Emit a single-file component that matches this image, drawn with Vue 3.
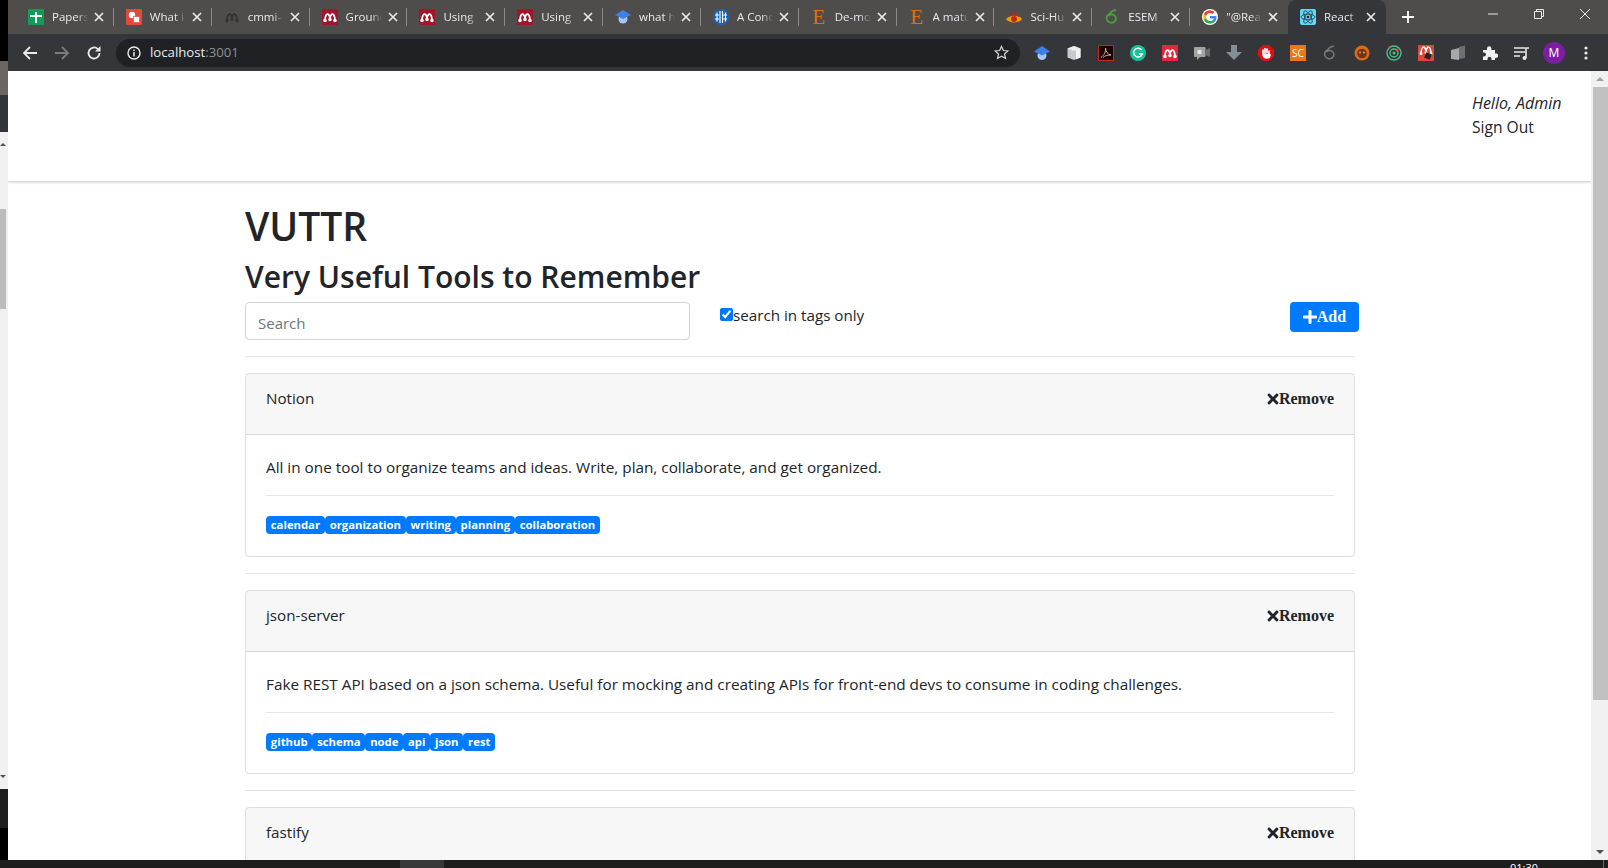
<template>
  <div class="screen">
    <div class="desktop-row">
      <div class="left-strip">
        <div class="ls-black"></div>
        <div class="ls-brown"></div>
        <div class="ls-dark"></div>
        <div class="ls-scroll">
          <span class="ls-up"></span>
          <div class="ls-thumb"></div>
          <span class="ls-down"></span>
        </div>
        <div class="ls-grey"></div>
        <div class="ls-black ls-end"></div>
      </div>

      <div class="window">
        <div class="tabstrip">
          <div
            v-for="(tab, i) in tabs"
            :key="i"
            class="tab"
            :class="{ active: tab.active, 'no-sep': tab.active || tabs[i + 1]?.active }"
          >
            <span class="favicon">
              <svg v-if="tab.icon === 'sheet'" viewBox="0 0 16 16" width="16" height="16">
                <rect width="16" height="16" rx="1" fill="#0f9d58" />
                <path d="M7 3h2v3h5v2H9v6H7V8H2V6h5z" fill="#fff" />
              </svg>
              <svg v-else-if="tab.icon === 'what'" viewBox="0 0 16 16" width="16" height="16">
                <rect width="16" height="16" rx="1" fill="#e2483c" />
                <circle cx="6" cy="6" r="3.200" fill="#fff" />
                <rect x="7.500" y="7.500" width="6" height="6" fill="#fff" stroke="#e2483c" stroke-width=".6" />
              </svg>
              <svg v-else-if="tab.icon === 'github'" viewBox="0 0 16 16" width="16" height="16">
                <path :d="mendeleyArcs" fill="none" stroke="#333" stroke-width="1.800" />
                <path :d="mendeleyFeet" fill="none" stroke="#333" stroke-width="3.600" stroke-linecap="round" />
              </svg>
              <svg v-else-if="tab.icon === 'mendeley'" viewBox="0 0 16 16" width="16" height="16">
                <rect width="16" height="16" fill="#a0162b" />
                <path :d="mendeleyArcs" fill="none" stroke="#fff" stroke-width="1.800" />
                <path :d="mendeleyFeet" fill="none" stroke="#fff" stroke-width="3.600" stroke-linecap="round" />
              </svg>
              <svg v-else-if="tab.icon === 'cap'" viewBox="0 0 16 16" width="16" height="16">
                <circle cx="8" cy="10" r="4.500" fill="#a5c7fa" />
                <path d="M8 1l8 5-8 4-8-4z" fill="#3f7fe8" />
              </svg>
              <svg v-else-if="tab.icon === 'ais'" viewBox="0 0 16 16" width="16" height="16">
                <circle cx="8" cy="8" r="8" fill="#1c62b5" />
                <path d="M4 3.500v9M7 2v12M9.500 2v12M12.500 3.500v9M2 6h4M10 6h4M2 10h4M10 10h4" stroke="#fff" stroke-width="1.100" fill="none" />
              </svg>
              <span v-else-if="tab.icon === 'elsevier'" class="fav-e">E</span>
              <svg v-else-if="tab.icon === 'scihub'" viewBox="0 0 16 16" width="16" height="16">
                <path d="M0 10c3-4.500 13-4.500 16 0-3 4.500-13 4.500-16 0z" fill="#e5a000" />
                <circle cx="8" cy="10" r="3" fill="#c6251d" />
                <path d="M2 6l2 1.500M5 3.500l1 2.500M8 2.500v3M11 3.500l-1 2.500M14 6l-2 1.500" stroke="#c6251d" stroke-width="1.300" />
              </svg>
              <svg v-else-if="tab.icon === 'overleaf'" viewBox="0 0 16 16" width="16" height="16">
                <path :d="leaf" fill="none" stroke="#47a141" stroke-width="1.800" />
              </svg>
              <svg v-else-if="tab.icon === 'google'" viewBox="0 0 16 16" width="16" height="16">
                <circle cx="8" cy="8" r="8" fill="#fff" />
                <path d="M14.500 8.200c0-.5 0-.9-.1-1.300H8v2.500h3.700c-.2.900-.7 1.600-1.400 2.100v1.700h2.200c1.300-1.200 2-3 2-5z" fill="#4285f4" />
                <path d="M8 14.700c1.900 0 3.400-.6 4.500-1.600l-2.200-1.700c-.6.400-1.400.7-2.300.7-1.800 0-3.300-1.200-3.800-2.800H1.900v1.800c1.100 2.200 3.400 3.600 6.100 3.600z" fill="#34a853" />
                <path d="M4.200 9.300C4 8.900 4 8.400 4 8s0-.9.200-1.300V4.900H1.900C1.500 5.800 1.300 6.900 1.300 8s.2 2.200.6 3.100z" fill="#fbbc05" />
                <path d="M8 4c1 0 1.900.3 2.600 1l1.900-1.900C11.400 2 9.900 1.300 8 1.300c-2.700 0-5 1.400-6.100 3.600l2.300 1.800C4.700 5.200 6.200 4 8 4z" fill="#ea4335" />
              </svg>
              <svg v-else-if="tab.icon === 'react'" viewBox="0 0 16 16" width="16" height="16">
                <rect width="16" height="16" rx="2" fill="#61dafb" />
                <g fill="none" stroke="#20232a" stroke-width=".7">
                  <ellipse cx="8" cy="8" rx="7" ry="2.800" />
                  <ellipse cx="8" cy="8" rx="7" ry="2.800" transform="rotate(60 8 8)" />
                  <ellipse cx="8" cy="8" rx="7" ry="2.800" transform="rotate(120 8 8)" />
                </g>
                <circle cx="8" cy="8" r="1.300" fill="#20232a" />
              </svg>
            </span>
            <span class="tab-title">{{ tab.title }}</span>
            <svg class="tab-close" viewBox="0 0 10 10" width="10" height="10">
              <path d="M1 1l8 8M9 1l-8 8" stroke="#e8eaed" stroke-width="1.700" />
            </svg>
          </div>
          <svg class="new-tab" viewBox="0 0 12 12" width="12" height="12">
            <path d="M6 0v12M0 6h12" stroke="#fff" stroke-width="1.800" />
          </svg>
          <div class="win-controls">
            <svg viewBox="0 0 12 12" width="12" height="12"><path d="M1 6h10" stroke="#e8e8e8" /></svg>
            <svg viewBox="0 0 12 12" width="12" height="12"><path d="M1.500 3.500h7v7h-7zM3.500 3.500v-2h7v7h-2" fill="none" stroke="#e8e8e8" /></svg>
            <svg viewBox="0 0 12 12" width="12" height="12"><path d="M1 1l10 10M11 1L1 11" stroke="#e8e8e8" /></svg>
          </div>
        </div>

        <div class="toolbar">
          <div class="nav-buttons">
            <svg viewBox="0 0 16 16" width="16" height="16"><path d="M15 8H2M8 2L2 8l6 6" fill="none" stroke="#e8eaed" stroke-width="1.800" /></svg>
            <svg viewBox="0 0 16 16" width="16" height="16"><path d="M1 8h13M8 2l6 6-6 6" fill="none" stroke="#7b7c7f" stroke-width="1.800" /></svg>
            <svg viewBox="0 0 16 16" width="16" height="16">
              <path d="M13.500 8a5.500 5.500 0 1 1-1.600-3.900" fill="none" stroke="#e8eaed" stroke-width="1.800" />
              <path d="M14.500 1v5.500H9z" fill="#e8eaed" />
            </svg>
          </div>
          <div class="omnibox">
            <svg class="info" viewBox="0 0 14 14" width="14" height="14">
              <circle cx="7" cy="7" r="6" fill="none" stroke="#e8eaed" stroke-width="1.400" />
              <path d="M7 6v4.500M7 3.500v1.400" stroke="#e8eaed" stroke-width="1.500" />
            </svg>
            <span class="url">localhost<span class="port">:3001</span></span>
            <svg class="star" viewBox="0 0 16 16" width="15" height="15">
              <path d="M8 1.500l2 4.400 4.800.5-3.600 3.200 1 4.700L8 11.900l-4.200 2.400 1-4.700L1.200 6.400 6 5.900z" fill="none" stroke="#d5d6d8" stroke-width="1.300" />
            </svg>
          </div>
          <div class="extensions">
            <span class="ext"><svg viewBox="0 0 16 16" width="16" height="16"><circle cx="8" cy="10.500" r="4.500" fill="#a5c7fa" /><path d="M8 1l8 5.500-8 4-8-4z" fill="#3f7fe8" /></svg></span>
            <span class="ext"><svg viewBox="0 0 16 16" width="16" height="16"><path d="M8 1l6.500 2.500v9L8 15l-6.500-2.500v-9z" fill="#c9c9c9" /><path d="M1.500 3.500L8 6l6.500-2.500L8 1z" fill="#ececec" /><path d="M10 5.200l4.500-1.700v9L10 14.200z" fill="#f2f2f2" /></svg></span>
            <span class="ext"><svg viewBox="0 0 16 16" width="16" height="16"><rect x=".5" y=".5" width="15" height="15" fill="#1a0505" stroke="#c0291c" /><path d="M3 12.500c3-2 5-6 4.500-9.500 0 3 2 6.500 5.500 7-3 0-6 .5-8 2.500" fill="none" stroke="#e8b4ae" stroke-width=".9" /></svg></span>
            <span class="ext"><svg viewBox="0 0 16 16" width="16" height="16"><circle cx="8" cy="8" r="8" fill="#15c39a" /><path d="M11.800 5.200A4.400 4.400 0 1 0 12.300 9H8.800" fill="none" stroke="#fff" stroke-width="1.500" /></svg></span>
            <span class="ext"><svg viewBox="0 0 16 16" width="16" height="16"><rect width="16" height="16" fill="#e7253c" /><path :d="mendeleyArcs" fill="none" stroke="#fff" stroke-width="1.800" /><path :d="mendeleyFeet" fill="none" stroke="#fff" stroke-width="3.600" stroke-linecap="round" /></svg></span>
            <span class="ext"><svg viewBox="0 0 16 16" width="16" height="16"><rect y="2" width="11.500" height="10" rx="1" fill="#a3a3a3" /><path d="M3 12v3l3-3z" fill="#a3a3a3" /><path d="M11.500 5l4.500-2v9l-4.500-2z" fill="#6c6c6c" /><rect x="3.500" y="5" width="4" height="4" rx="1" fill="#e6e6e6" /></svg></span>
            <span class="ext"><svg viewBox="0 0 16 16" width="16" height="16"><path d="M5 0h6v7h5l-8 8-8-8h5z" fill="#7f9097" /></svg></span>
            <span class="ext"><svg viewBox="0 0 16 16" width="16" height="16"><path d="M5 0h6l5 5v6l-5 5H5l-5-5V5z" fill="#e01010" /><path d="M5 8V4.500M7 8V3M9 8V3.500M11 9V5.500M5 8c0 3 1 5 4 5s3-2 3-4" stroke="#fff" stroke-width="1.700" fill="#fff" /></svg></span>
            <span class="ext"><span class="sc-badge">SC</span></span>
            <span class="ext"><svg viewBox="0 0 16 16" width="16" height="16"><path :d="leaf" fill="none" stroke="#77787b" stroke-width="1.500" /></svg></span>
            <span class="ext"><svg viewBox="0 0 16 16" width="16" height="16"><circle cx="8" cy="8" r="7.500" fill="#e06a13" /><circle cx="8" cy="8.500" r="4.800" fill="#6e3413" /><circle cx="6" cy="7.500" r=".9" fill="#e9b07a" /><circle cx="10" cy="7.500" r=".9" fill="#e9b07a" /></svg></span>
            <span class="ext"><svg viewBox="0 0 16 16" width="16" height="16"><circle cx="8" cy="8" r="7" fill="none" stroke="#4dbd8c" stroke-width="1.400" /><circle cx="8" cy="8" r="4" fill="none" stroke="#4dbd8c" stroke-width="1.400" /><circle cx="8" cy="8" r="1.500" fill="#4dbd8c" /><circle cx="11" cy="5" r="1.500" fill="#e44d3c" /><circle cx="3.500" cy="2.500" r="1.200" fill="#e44d3c" /></svg></span>
            <span class="ext"><svg viewBox="0 0 16 16" width="16" height="16"><rect width="16" height="16" fill="#d9483b" /><g transform="translate(0 -3)"><path :d="mendeleyArcs" fill="none" stroke="#fff" stroke-width="1.500" /><path :d="mendeleyFeet" fill="none" stroke="#fff" stroke-width="3" stroke-linecap="round" /></g><rect x="7" y="8" width="6" height="6" transform="rotate(20 10 11)" fill="#2c2220" /></svg></span>
            <span class="ext"><svg viewBox="0 0 16 16" width="16" height="16"><path d="M1 5l8-2v12l-8-1z" fill="#a8a8a8" /><path d="M9 2l6-1.500V13l-6 1z" fill="#6f6f6f" /></svg></span>
            <span class="ext"><svg viewBox="0 0 16 16" width="16" height="16"><path d="M1 5h4V3.500a2.200 2.200 0 0 1 4.400 0V5H13v3.500h1a2.200 2.200 0 0 1 0 4.400h-1V15H9.500v-1.200a2 2 0 0 0-4 0V15H1v-3.500h1a2 2 0 0 0 0-4H1z" fill="#f0f1f2" /></svg></span>
            <span class="ext"><svg viewBox="0 0 16 16" width="16" height="16"><path d="M0 3h11M0 7h11M0 11h6" stroke="#e8eaed" stroke-width="1.600" /><path d="M12 13V3h3" fill="none" stroke="#e8eaed" stroke-width="1.600" /><circle cx="10.500" cy="13" r="2" fill="#e8eaed" /></svg></span>
            <span class="ext"><span class="avatar">M</span></span>
            <span class="ext"><svg viewBox="0 0 4 16" width="4" height="16"><circle cx="2" cy="3" r="1.600" fill="#e8eaed" /><circle cx="2" cy="8" r="1.600" fill="#e8eaed" /><circle cx="2" cy="13" r="1.600" fill="#e8eaed" /></svg></span>
          </div>
        </div>

        <div class="viewport">
          <div class="page">
            <header class="page-header">
              <div class="user">
                <em>Hello, Admin</em>
                <span class="sign-out">Sign Out</span>
              </div>
            </header>
            <main class="container">
              <h1>VUTTR</h1>
              <h2>Very Useful Tools to Remember</h2>
              <div class="controls">
                <input class="search" type="text" placeholder="Search" />
                <label class="tags-only"><input type="checkbox" checked />search in tags only</label>
                <button type="button" class="btn-add">
                  <svg viewBox="0 0 448 512" width="14" height="16"><path d="M416 208H272V64c0-17.670-14.330-32-32-32h-32c-17.670 0-32 14.330-32 32v144H32c-17.670 0-32 14.330-32 32v32c0 17.670 14.330 32 32 32h144v144c0 17.670 14.330 32 32 32h32c17.670 0 32-14.330 32-32V304h144c17.670 0 32-14.330 32-32v-32c0-17.670-14.330-32-32-32z" fill="currentColor" /></svg>Add
                </button>
              </div>
              <hr />
              <template v-for="tool in tools" :key="tool.name">
                <section class="card">
                  <div class="card-header">
                    <span class="tool-name">{{ tool.name }}</span>
                    <button type="button" class="btn-remove">
                      <svg viewBox="0 0 352 512" width="12" height="16"><path d="M242.720 256l100.070-100.070c12.280-12.280 12.280-32.190 0-44.480l-22.240-22.240c-12.280-12.280-32.190-12.280-44.480 0L176 189.280 75.930 89.210c-12.280-12.280-32.190-12.280-44.480 0L9.210 111.450c-12.280 12.280-12.280 32.190 0 44.480L109.280 256 9.210 356.070c-12.280 12.280-12.280 32.190 0 44.480l22.240 22.240c12.280 12.280 32.200 12.280 44.480 0L176 322.720l100.070 100.070c12.280 12.280 32.200 12.280 44.480 0l22.240-22.240c12.280-12.280 12.280-32.190 0-44.480L242.720 256z" fill="currentColor" /></svg>Remove
                    </button>
                  </div>
                  <div v-if="tool.description" class="card-body">
                    <p>{{ tool.description }}</p>
                    <div class="card-rule"></div>
                    <div class="badges">
                      <span v-for="tag in tool.tags" :key="tag" class="badge">{{ tag }}</span>
                    </div>
                  </div>
                </section>
                <hr />
              </template>
            </main>
          </div>
          <div class="scrollbar">
            <span class="sb-up"></span>
            <div class="sb-thumb"></div>
            <span class="sb-down"></span>
          </div>
        </div>
      </div>
    </div>
    <footer class="taskbar">
      <span class="task-active"></span>
      <span class="clock">01:30</span>
      <span class="task-edge"></span>
    </footer>
  </div>
</template>

<script setup>
// shared favicon strokes
const mendeleyArcs = 'M3 11C3.500 3.500 7 3.500 8 9C9 3.500 12.500 3.500 13 11'
const mendeleyFeet = 'M3 11.500h0M8 10.500h0M13 11.500h0'
const leaf = 'M12 1c-3 .5-5 1.500-6 3.500C3 6 2 8.500 3 11c1 2.500 4.500 3.500 7 2 2.500-1.500 2.500-5 .5-6.500-2-1.500-4.500-1-6 .5'

const tabs = [
  { title: 'Papers', icon: 'sheet' },
  { title: 'What i', icon: 'what' },
  { title: 'cmmi-', icon: 'github' },
  { title: 'Ground', icon: 'mendeley' },
  { title: 'Using', icon: 'mendeley' },
  { title: 'Using', icon: 'mendeley' },
  { title: 'what h', icon: 'cap' },
  { title: 'A Conc', icon: 'ais' },
  { title: 'De-mo', icon: 'elsevier' },
  { title: 'A matu', icon: 'elsevier' },
  { title: 'Sci-Hu', icon: 'scihub' },
  { title: 'ESEM', icon: 'overleaf' },
  { title: '"@Rea', icon: 'google' },
  { title: 'React', icon: 'react', active: true }
]

const tools = [
  {
    name: 'Notion',
    description: 'All in one tool to organize teams and ideas. Write, plan, collaborate, and get organized.',
    tags: ['calendar', 'organization', 'writing', 'planning', 'collaboration']
  },
  {
    name: 'json-server',
    description: 'Fake REST API based on a json schema. Useful for mocking and creating APIs for front-end devs to consume in coding challenges.',
    tags: ['github', 'schema', 'node', 'api', 'json', 'rest']
  },
  { name: 'fastify' }
]
</script>

<style>
html,
body {
  margin: 0;
  overflow: hidden;
}
</style>

<style scoped>
.screen {
  width: 1608px;
  height: 868px;
  display: flex;
  flex-direction: column;
  overflow: hidden;
  background: #000;
  font-family: "Open Sans", "Noto Sans", sans-serif;
  color: #212529;
}
.desktop-row {
  flex: 1;
  min-height: 0;
  display: flex;
}

.left-strip {
  width: 8px;
  display: flex;
  flex-direction: column;
}
.ls-black {
  height: 61px;
  background: #000;
}
.ls-brown {
  height: 34px;
  background: #6c6661;
}
.ls-dark {
  height: 37px;
  background: #33343a;
}
.ls-scroll {
  height: 657px;
  background: #f0f0f0;
  position: relative;
}
.ls-up,
.ls-down {
  position: absolute;
  left: 0;
  border: 3px solid transparent;
}
.ls-up {
  top: 8px;
  border-bottom-color: #505050;
}
.ls-down {
  bottom: 8px;
  border-top-color: #505050;
}
.ls-thumb {
  margin-top: 77px;
  width: 6px;
  height: 100px;
  background: #bcbcbc;
}
.ls-grey {
  height: 39px;
  background: #1e1e1e;
}
.ls-end {
  flex: 1;
}

.window {
  flex: 1;
  min-width: 0;
  display: flex;
  flex-direction: column;
}

.tabstrip {
  height: 34px;
  flex: none;
  padding-left: 8px;
  background: #4f4d4b;
  display: flex;
  align-items: stretch;
  font-size: 11.500px;
}
.tab {
  width: 97.850px;
  flex: none;
  box-sizing: border-box;
  padding: 0 0 0 12px;
  display: flex;
  align-items: center;
  color: #e8eaed;
  position: relative;
}
.tab::after {
  content: "";
  position: absolute;
  right: 0;
  top: 8px;
  height: 18px;
  width: 1px;
  background: #8b8a88;
}
.tab.no-sep::after {
  display: none;
}
.tab.active {
  background: #35363a;
  border-radius: 8px 8px 0 0;
}
.favicon {
  width: 16px;
  height: 16px;
  flex: none;
  display: block;
}
.favicon svg {
  display: block;
}
.fav-e {
  display: block;
  font: 21px/16px "Liberation Serif", serif;
  color: #e06d12;
  text-align: center;
}
.tab-title {
  width: 38px;
  margin: -2px 0 0 8px;
  flex: none;
  overflow: hidden;
  white-space: nowrap;
  -webkit-mask-image: linear-gradient(90deg, #000 65%, transparent 95%);
  mask-image: linear-gradient(90deg, #000 65%, transparent 95%);
}
.tab-close {
  margin-left: 4px;
  flex: none;
}
.new-tab {
  margin: 11px 0 0 16px;
  flex: none;
}
.win-controls {
  margin-left: auto;
  padding: 8px 17px 0 0;
  display: flex;
  gap: 34px;
  align-items: flex-start;
}

.toolbar {
  height: 37px;
  flex: none;
  background: #35363a;
  display: flex;
  align-items: center;
}
.nav-buttons {
  width: 108px;
  flex: none;
  padding-left: 14px;
  box-sizing: border-box;
  display: flex;
  gap: 16px;
}
.omnibox {
  width: 904px;
  height: 28px;
  flex: none;
  box-sizing: border-box;
  padding: 0 11px;
  border-radius: 14px;
  background: #202124;
  display: flex;
  align-items: center;
  font-size: 13.200px;
  color: #e8eaed;
}
.info {
  margin-right: 9px;
}
.url {
  margin-top: -2px;
}
.port {
  color: #8f9094;
}
.star {
  margin-left: auto;
}
.extensions {
  margin-left: 6px;
  display: flex;
}
.ext {
  width: 32px;
  height: 24px;
  display: flex;
  align-items: center;
  justify-content: center;
}
.sc-badge {
  width: 16px;
  height: 16px;
  background: #ee7711;
  color: #fff;
  font-size: 10px;
  line-height: 16px;
  text-align: center;
}
.avatar {
  width: 22px;
  height: 22px;
  border-radius: 50%;
  background: #7b1fa2;
  color: #fff;
  font-size: 12px;
  line-height: 22px;
  text-align: center;
}

.viewport {
  flex: 1;
  min-height: 0;
  display: flex;
  background: #fff;
}
.page {
  flex: 1;
  min-width: 0;
  overflow: hidden;
}
.page-header {
  height: 111px;
  box-sizing: border-box;
  padding-top: 20px;
  border-bottom: 1px solid #d9d9d9;
  box-shadow: 0 1px 2px rgba(0, 0, 0, 0.12);
  display: flex;
  justify-content: flex-end;
  font-size: 16px;
  line-height: 24px;
}
.user {
  width: 119px;
  display: flex;
  flex-direction: column;
}
.sign-out {
  font-size: 15.600px;
}
.container {
  width: 1110px;
  margin-left: 237px;
  padding-top: 20px;
}
h1 {
  margin: 0 0 8px;
  font-size: 39px;
  line-height: 47px;
  font-weight: 600;
}
h2 {
  margin: 0 0 6px;
  font-size: 30px;
  line-height: 39px;
  font-weight: 600;
}
.controls {
  display: flex;
  align-items: flex-start;
}
.search {
  width: 445px;
  height: 38px;
  box-sizing: border-box;
  padding: 8px 12px 4px;
  border: 1px solid #ced4da;
  border-radius: 4px;
  font: inherit;
  font-size: 15px;
  outline: none;
}
.search::placeholder {
  color: #6c757d;
}
.tags-only {
  margin: 1px 0 0 30px;
  font-size: 15.200px;
  line-height: 24px;
}
.tags-only input {
  margin: 0;
}
.btn-add {
  margin: 0 -4px 0 auto;
  width: 69px;
  height: 30px;
  padding: 0;
  border: 0;
  border-radius: 4px;
  background: #007bff;
  color: #fff;
  display: flex;
  align-items: center;
  justify-content: center;
  font: bold 16px "Liberation Serif", serif;
}
hr {
  margin: 16px 0;
  border: 0;
  border-top: 1px solid rgba(0, 0, 0, 0.1);
}
.card {
  border: 1px solid rgba(0, 0, 0, 0.125);
  border-radius: 4px;
}
.card-header {
  height: 61px;
  box-sizing: border-box;
  padding: 12px 20px;
  background: rgba(0, 0, 0, 0.03);
  border-bottom: 1px solid rgba(0, 0, 0, 0.125);
  display: flex;
  justify-content: space-between;
  align-items: flex-start;
  font-size: 15.200px;
  line-height: 24px;
}
.btn-remove {
  margin-top: 1px;
  padding: 0;
  border: 0;
  background: none;
  color: #212529;
  display: flex;
  align-items: center;
  font: bold 16px/24px "Liberation Serif", serif;
}
.card-body {
  padding: 20px 20px 22px;
  font-size: 15.300px;
  line-height: 24px;
}
.card-body p {
  margin: 0 0 16px;
}
.card-rule {
  height: 1px;
  margin-bottom: 20px;
  background: rgba(0, 0, 0, 0.1);
}
.badges {
  display: flex;
}
.badge {
  height: 18px;
  padding: 0 4.800px;
  border-radius: 4px;
  background: #007bff;
  color: #fff;
  font-size: 11.300px;
  line-height: 18px;
  font-weight: 700;
}

.scrollbar {
  width: 17px;
  flex: none;
  background: #f1f1f1;
  position: relative;
}
.sb-thumb {
  margin: 16px 0 0 2px;
  height: 613px;
  background: #c1c1c1;
}
.sb-up,
.sb-down {
  position: absolute;
  left: 5px;
  border: 4px solid transparent;
}
.sb-up {
  top: 2px;
  border-bottom-color: #a3a3a3;
}
.sb-down {
  bottom: 2px;
  border-top-color: #505050;
}

.taskbar {
  height: 8px;
  flex: none;
  background: #1d1d1d;
  position: relative;
  overflow: hidden;
}
.task-active {
  position: absolute;
  left: 400px;
  top: 0;
  width: 44px;
  height: 8px;
  background: #383838;
}
.clock {
  position: absolute;
  left: 1510px;
  top: 1px;
  color: #fff;
  font-size: 11px;
  line-height: 14px;
}
.task-edge {
  position: absolute;
  left: 1603px;
  top: 0;
  width: 1px;
  height: 8px;
  background: #666;
}
</style>
